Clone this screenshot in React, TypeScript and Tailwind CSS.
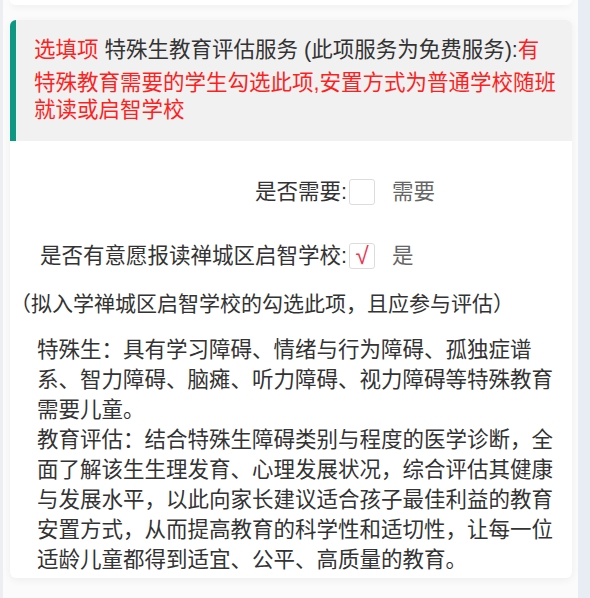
const font = { fontFamily: '"Liberation Sans", "Noto Sans CJK SC", sans-serif' };

function CheckRow({
  label,
  option,
  checked,
  className,
}: {
  label: string;
  option: string;
  checked?: boolean;
  className?: string;
}) {
  return (
    <div className={"flex items-center " + (className ?? "")}>
      <div className="w-[337px] shrink-0 text-right text-[21.5px] leading-[30px] text-[#333]">
        {label}
      </div>
      <div className="ml-[2px] flex h-[26px] w-[26px] shrink-0 items-center justify-center rounded-[3px] border border-[#dcdcdc] bg-white">
        {checked ? (
          <span className="text-[24px] leading-none text-[#f0324e]">√</span>
        ) : null}
      </div>
      <div className="ml-[17px] text-[21.5px] leading-[30px] text-[#666]">{option}</div>
    </div>
  );
}

export default function App() {
  return (
    <div className="flex h-[598px] w-[590px] overflow-hidden bg-[#e8ecf3]" style={font}>
      <div className="flex w-[578px] flex-col border-l-[3px] border-[#eceef2] bg-[#fbfbfc] pl-[7px] pr-[6px]">
        <div className="h-[5px] rounded-b-md bg-white shadow-[0_2px_6px_rgba(0,0,0,0.06)]" />

        <div className="mt-[15px] h-[558px] overflow-hidden rounded-md bg-white shadow-[0_2px_8px_rgba(0,0,0,0.06)]">
          <div className="border-l-[6px] border-[#0d9883] bg-[#f1f1f1] pb-[17px] pl-[18px] pr-[15px] pt-[17px] text-[21.5px] leading-[27px] text-[#333]">
            <span className="inline-block pb-[6px] text-[#ff1f1f]">选填项</span>
            {" "}特殊生教育评估服务 (此项服务为免费服务):
            <span className="text-[#ff1f1f]">
              有特殊教育需要的学生勾选此项,安置方式为普通学校随班就读或启智学校
            </span>
          </div>

          <CheckRow className="mt-[36px]" label="是否需要:" option="需要" />
          <CheckRow className="mt-[34px]" label="是否有意愿报读禅城区启智学校:" option="是" checked />

          <p className="mt-[18px] text-[21px] leading-[30px] text-[#333]">
            （拟入学禅城区启智学校的勾选此项，且应参与评估）
          </p>

          <div className="mt-[16px] pl-[27px] pr-[5px] text-[21.5px] leading-[30px] text-[#333]">
            <p>特殊生：具有学习障碍、情绪与行为障碍、孤独症谱系、智力障碍、脑瘫、听力障碍、视力障碍等特殊教育需要儿童。</p>
            <p>
              教育评估：结合特殊生障碍类别与程度的医学诊断，全面了解该生生理发育、心理发展状况，综合评估其健康与发展水平，以此向家长建议适合孩子最佳利益的教育安置方式，从而提高教育的科学性和适切性，让每一位适龄儿童都得到适宜、公平、高质量的教育。
            </p>
          </div>
        </div>
      </div>
    </div>
  );
}
